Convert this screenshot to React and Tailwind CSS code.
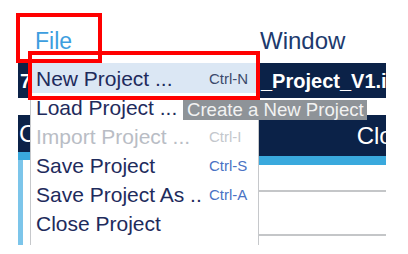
import React from 'react';

const items = [
  { label: 'New Project ...', key: 'Ctrl-N', active: true },
  { label: 'Load Project ...', key: '' },
  { label: 'Import Project ...', key: 'Ctrl-I', disabled: true },
  { label: 'Save Project', key: 'Ctrl-S' },
  { label: 'Save Project As ..', key: 'Ctrl-A' },
  { label: 'Close Project', key: '' },
  { label: 'Save as Template ...', key: '' },
];

function MenuItem({ item }) {
  let rowClass = 'flex items-center h-[29px] pl-[5px] shrink-0';
  if (item.active) rowClass += ' bg-[#dbe7f4] h-[30px]';

  let labelClass = 'w-[173px] shrink-0 whitespace-nowrap text-[21px] leading-none text-[#1e2b5c]';
  if (item.disabled) labelClass = 'w-[173px] shrink-0 whitespace-nowrap text-[21px] leading-none text-[#b9bdc5]';

  let keyClass = 'text-[15px] leading-none text-[#4a72c4]';
  if (item.active) keyClass = 'text-[15px] leading-none text-[#3b4a6b]';
  if (item.disabled) keyClass = 'text-[15px] leading-none text-[#c3c7cc]';

  return (
    <div className={rowClass}>
      <span className={labelClass}>{item.label}</span>
      <span className={keyClass}>{item.key}</span>
    </div>
  );
}

export default function App() {
  return (
    <div className="bg-white w-[408px] h-[254px] font-['Liberation_Sans',Arial,sans-serif]">
      <div className="relative w-[386px] h-[245px] overflow-hidden">
        {/* Menu bar */}
        <div className="flex items-end h-[63px] pb-[10px]">
          <span className="ml-[35px] w-[225px] text-[23px] leading-none text-[#3d9edf]">File</span>
          <span className="text-[24px] leading-none text-[#1d3a6e]">Window</span>
        </div>

        {/* Title bar */}
        <div className="ml-[18px] h-[35px] bg-[#0b2248] flex items-center overflow-hidden text-white font-bold text-[20px] whitespace-nowrap">
          <span className="w-[243px] shrink-0 pl-[2px]">7</span>
          <span>_Project_V1.ini</span>
        </div>

        {/* Table */}
        <div className="ml-[18px] mt-[17px] flex">
          <div className="w-[240px] shrink-0 flex flex-col">
            <div className="h-[37px] bg-[#0b2248] text-white text-[24px] flex items-center pl-[1px] whitespace-nowrap overflow-hidden">Configuration</div>
            <div className="h-[8px] bg-[#3aa9dd]"></div>
            <div className="h-[90px] flex">
              <div className="w-[5px] bg-[#7cc5ea]"></div>
            </div>
          </div>
          <div className="flex-1 flex flex-col border-l border-[#c9cbcd]">
            <div className="h-[41px] bg-[#0b2248] text-white text-[24px] flex items-center justify-end whitespace-nowrap overflow-hidden">
              <span className="-mr-[32px]">Close</span>
            </div>
            <div className="h-[9px] bg-[#3aa9dd]"></div>
            <div className="h-[27px] border-b-2 border-[#c4c6c8]"></div>
            <div className="h-[44px] border-b-2 border-[#c4c6c8]"></div>
          </div>
        </div>

        {/* Dropdown menu */}
        <div className="absolute left-[30px] top-[63px] w-[229px] h-[182px] bg-white border-l border-r border-[#c6c8cb] flex flex-col overflow-hidden">
          {items.map((item) => (
            <MenuItem key={item.label} item={item} />
          ))}
        </div>

        {/* Tooltip */}
        <div className="absolute left-[183px] top-[100px] w-[184px] h-[20px] bg-[#8e9398] text-[#f2f2f2] text-[18.6px] leading-[20px] pl-[4px] whitespace-nowrap">
          Create a New Project
        </div>

        {/* Annotation boxes */}
        <div className="absolute left-[16px] top-[13px] w-[86px] h-[50px] border-4 border-[#ff0000]"></div>
        <div className="absolute left-[28px] top-[51px] w-[232px] h-[49px] border-4 border-[#ff0000]"></div>
      </div>
    </div>
  );
}
